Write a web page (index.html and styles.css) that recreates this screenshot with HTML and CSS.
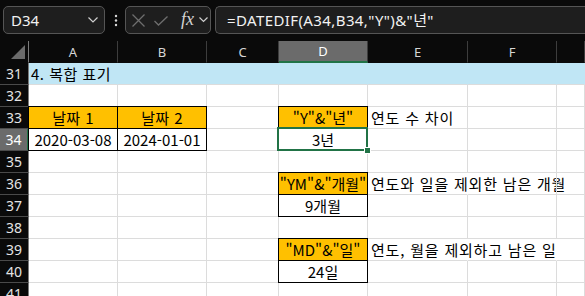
FILE: index.html
```html
<!DOCTYPE html>
<html lang="ko">
<head>
<meta charset="utf-8">
<link rel="stylesheet" href="styles.css">
</head>
<body>
<div class="toolbar">
  <div class="namebox">
    <span class="nb-text">D34</span>
    <svg class="chev" width="10" height="6" viewBox="0 0 10 6"><polyline points="0.5,0.5 5,5 9.5,0.5" fill="none" stroke="#cfcfcf" stroke-width="1.2"/></svg>
  </div>
  <svg class="dots" width="4" height="14" viewBox="0 0 4 14"><circle cx="2" cy="2" r="1.2" fill="#d8d8d8"/><circle cx="2" cy="6.5" r="1.2" fill="#d8d8d8"/><circle cx="2" cy="11" r="1.2" fill="#d8d8d8"/></svg>
  <div class="fxbox">
    <svg class="ico-x" width="13" height="13" viewBox="0 0 13 13"><path d="M0.5 0.5 L12.5 12.5 M12.5 0.5 L0.5 12.5" stroke="#6e6e6e" stroke-width="1.3" fill="none"/></svg>
    <svg class="ico-ok" width="14" height="10" viewBox="0 0 14 10"><polyline points="0.5,5 4.5,9 13.5,0.5" fill="none" stroke="#6e6e6e" stroke-width="1.3"/></svg>
    <span class="fx">fx</span>
    <svg class="chev2" width="9" height="6" viewBox="0 0 9 6"><polyline points="0.5,0.5 4.5,4.5 8.5,0.5" fill="none" stroke="#cfcfcf" stroke-width="1.2"/></svg>
  </div>
  <div class="formula">=DATEDIF(A34,B34,"Y")&amp;"년"</div>
</div>
<div class="sheet">
  <div class="c hc corner"><span class="tri"></span></div>
  <div class="c hc">A</div>
  <div class="c hc">B</div>
  <div class="c hc">C</div>
  <div class="c hc hsel">D</div>
  <div class="c hc">E</div>
  <div class="c hc">F</div>
  <div class="c hc"></div>

  <div class="c rh">31</div>
  <div class="c blue title">4. 복합 표기</div>
  <div class="c blue"></div>
  <div class="c blue"></div>
  <div class="c blue"></div>
  <div class="c blue"></div>
  <div class="c blue"></div>
  <div class="c blue"></div>

  <div class="c rh">32</div>
  <div class="c"></div><div class="c"></div><div class="c"></div><div class="c"></div><div class="c"></div><div class="c"></div><div class="c"></div>

  <div class="c rh">33</div>
  <div class="c yel bx ctr ko">날짜 1</div>
  <div class="c yel bx ctr ko">날짜 2</div>
  <div class="c"></div>
  <div class="c yel bx ctr">"Y"&amp;"년"</div>
  <div class="c txt">연도 수 차이</div>
  <div class="c"></div>
  <div class="c"></div>

  <div class="c rh rsel">34</div>
  <div class="c bx ctr">2020-03-08</div>
  <div class="c bx ctr">2024-01-01</div>
  <div class="c"></div>
  <div class="c sel ctr">3년<span class="handle"></span></div>
  <div class="c"></div>
  <div class="c"></div>
  <div class="c"></div>

  <div class="c rh">35</div>
  <div class="c"></div><div class="c"></div><div class="c"></div><div class="c"></div><div class="c"></div><div class="c"></div><div class="c"></div>

  <div class="c rh">36</div>
  <div class="c"></div>
  <div class="c"></div>
  <div class="c"></div>
  <div class="c yel bx ctr">"YM"&amp;"개월"</div>
  <div class="c txt nor">연도와 일을 제외한 남은 개월</div>
  <div class="c"></div>
  <div class="c"></div>

  <div class="c rh">37</div>
  <div class="c"></div>
  <div class="c"></div>
  <div class="c"></div>
  <div class="c bx ctr">9개월</div>
  <div class="c"></div>
  <div class="c"></div>
  <div class="c"></div>

  <div class="c rh">38</div>
  <div class="c"></div><div class="c"></div><div class="c"></div><div class="c"></div><div class="c"></div><div class="c"></div><div class="c"></div>

  <div class="c rh">39</div>
  <div class="c"></div>
  <div class="c"></div>
  <div class="c"></div>
  <div class="c yel bx ctr">"MD"&amp;"일"</div>
  <div class="c txt nor">연도, 월을 제외하고 남은 일</div>
  <div class="c nor"></div>
  <div class="c"></div>

  <div class="c rh">40</div>
  <div class="c"></div>
  <div class="c"></div>
  <div class="c"></div>
  <div class="c bx ctr">24일</div>
  <div class="c"></div>
  <div class="c"></div>
  <div class="c"></div>

  <div class="c rh">41</div>
  <div class="c"></div><div class="c"></div><div class="c"></div><div class="c"></div><div class="c"></div><div class="c"></div><div class="c"></div>
</div>
</body>
</html>
```
FILE: styles.css
```css
html, body {
  margin: 0;
  padding: 0;
  background: #ffffff;
  width: 585px;
  height: 296px;
  overflow: hidden;
}

.toolbar {
  height: 41px;
  background: #0a0a0a;
  display: flex;
  align-items: flex-start;
  padding-top: 6px;
  padding-left: 3px;
  box-sizing: border-box;
  white-space: nowrap;
}

.namebox {
  width: 102px;
  height: 28px;
  box-sizing: border-box;
  border: 1px solid #555555;
  border-radius: 5px;
  background: #1e1e1e;
  display: flex;
  align-items: center;
  padding-left: 7px;
  padding-right: 5px;
  flex: none;
}

.nb-text {
  color: #f2f2f2;
  font: 15px "Noto Sans", "DejaVu Sans", sans-serif;
  flex: 1;
}

.chev {
  margin-right: 1px;
}

.dots {
  margin-left: 9px;
  margin-top: 8px;
  flex: none;
}

.fxbox {
  margin-left: 7px;
  width: 86px;
  height: 28px;
  box-sizing: border-box;
  border: 1px solid #555555;
  border-radius: 5px;
  background: #1e1e1e;
  display: flex;
  align-items: center;
  padding-left: 6px;
  flex: none;
}

.ico-x {
  margin-top: 1px;
}

.ico-ok {
  margin-left: 9px;
  margin-top: 2px;
}

.fx {
  margin-left: 13px;
  color: #d4d4d4;
  font: italic 18px "Liberation Serif", "DejaVu Serif", serif;
  line-height: 1;
  margin-top: -2px;
}

.chev2 {
  margin-left: 5px;
}

.formula {
  margin-left: 4px;
  height: 28px;
  flex: 1;
  box-sizing: border-box;
  border: 1px solid #555555;
  border-right: none;
  border-radius: 5px 0 0 5px;
  background: #1e1e1e;
  color: #f2f2f2;
  font: 15px "Noto Sans", "Noto Sans CJK KR", sans-serif;
  letter-spacing: 0.4px;
  padding-left: 11px;
  line-height: 26px;
}

.sheet {
  display: grid;
  grid-template-columns: 29px 89px 89px 72px 89px 100px 89px 1fr;
  grid-auto-rows: 22px;
}

.c {
  box-sizing: border-box;
  border-right: 1px solid #dcdcdc;
  border-bottom: 1px solid #dcdcdc;
  font: 15px "Noto Sans CJK KR", "Noto Sans", sans-serif;
  color: #000;
  display: flex;
  align-items: center;
  white-space: nowrap;
  min-width: 0;
  padding: 0 2px;
}

.hc {
  background: #0a0a0a;
  color: #d6d6d6;
  font: 13px "Noto Sans", sans-serif;
  justify-content: center;
  border-right-color: #3d3d3d;
  border-bottom-color: #0a0a0a;
}

.corner {
  position: relative;
  border-right-color: #7a7a7a;
}

.tri {
  position: absolute;
  right: 3px;
  bottom: 3px;
  width: 0;
  height: 0;
  border-left: 14px solid transparent;
  border-bottom: 14px solid #6b6b6b;
}

.hsel {
  background: #6b6b6b;
  color: #ffffff;
  border-bottom: 2px solid #217346;
}

.rh {
  background: #0a0a0a;
  color: #e4e4e4;
  font: 14px "Noto Sans", sans-serif;
  justify-content: center;
  border-right-color: #7a7a7a;
  border-bottom-color: #4a4a4a;
  padding: 0;
}

.rsel {
  background: #6b6b6b;
  color: #ffffff;
  border-right: 2px solid #217346;
}

.blue {
  background: #c0e6f5;
  border-right-color: #c0e6f5;
}

.title {
  padding-left: 2px;
  letter-spacing: 0.5px;
}

.yel {
  background: #ffc000;
}

.ctr {
  justify-content: center;
}

.ko {
  letter-spacing: 0.4px;
}

.txt {
  padding-left: 3px;
  letter-spacing: 0.8px;
}

.nor {
  border-right-color: transparent;
}

.bx {
  position: relative;
}

.bx::after {
  content: "";
  position: absolute;
  left: -1px;
  top: -1px;
  right: -1px;
  bottom: -1px;
  border: 1px solid #000;
  pointer-events: none;
}

.sel {
  position: relative;
}

.sel::after {
  content: "";
  position: absolute;
  left: -2px;
  top: -2px;
  right: -1px;
  bottom: -1px;
  border: 2px solid #217346;
  pointer-events: none;
}

.handle {
  position: absolute;
  right: -4px;
  bottom: -4px;
  width: 5px;
  height: 5px;
  background: #217346;
  border: 1px solid #ffffff;
  z-index: 2;
}
```
